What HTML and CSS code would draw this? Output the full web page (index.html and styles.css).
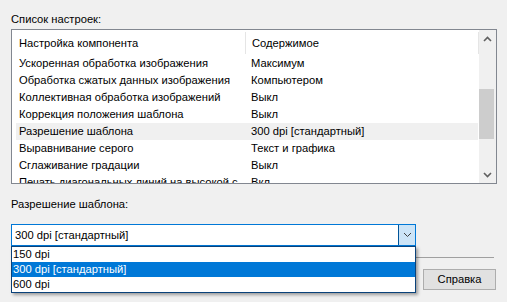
FILE: index.html
```html
<!DOCTYPE html>
<html lang="ru">
<head>
<meta charset="utf-8">
<link rel="stylesheet" href="styles.css">
</head>
<body>
<div class="page">
  <div class="label first">Список настроек:</div>
  <div class="listbox">
    <div class="list">
      <div class="row head"><div class="c1">Настройка компонента</div><div class="c2">Содержимое</div></div>
      <div class="row"><div class="c1">Ускоренная обработка изображения</div><div class="c2">Максимум</div></div>
      <div class="row"><div class="c1">Обработка сжатых данных изображения</div><div class="c2">Компьютером</div></div>
      <div class="row"><div class="c1">Коллективная обработка изображений</div><div class="c2">Выкл</div></div>
      <div class="row"><div class="c1">Коррекция положения шаблона</div><div class="c2">Выкл</div></div>
      <div class="row sel"><div class="c1">Разрешение шаблона</div><div class="c2">300 dpi [стандартный]</div></div>
      <div class="row"><div class="c1">Выравнивание серого</div><div class="c2">Текст и графика</div></div>
      <div class="row"><div class="c1">Сглаживание градации</div><div class="c2">Выкл</div></div>
      <div class="row"><div class="c1">Печать диагональных линий на высокой с</div><div class="c2">Вкл</div></div>
    </div>
    <div class="vscroll">
      <div class="arrow"><svg width="9" height="6" viewBox="0 0 9 6"><path d="M1 5 L4.5 1.5 L8 5" fill="none" stroke="#606060" stroke-width="1.6"/></svg></div>
      <div class="track"><div class="thumb"></div></div>
      <div class="arrow"><svg width="9" height="6" viewBox="0 0 9 6"><path d="M1 1 L4.5 4.5 L8 1" fill="none" stroke="#606060" stroke-width="1.6"/></svg></div>
    </div>
  </div>
  <div class="label second">Разрешение шаблона:</div>
  <div class="combo-wrap">
    <div class="combo">
      <div class="combo-text">300 dpi [стандартный]</div>
      <div class="combo-btn"><svg width="9" height="6" viewBox="0 0 9 6"><path d="M1 1 L4.5 4.5 L8 1" fill="none" stroke="#404040" stroke-width="1"/></svg></div>
    </div>
    <div class="droplist">
      <div class="item">150 dpi</div>
      <div class="item active">300 dpi [стандартный]</div>
      <div class="item">600 dpi</div>
    </div>
  </div>
  <div class="sep"></div>
  <div class="buttons">
    <div class="btn">Справка</div>
  </div>
</div>
</body>
</html>
```
FILE: styles.css
```css
html, body {
  margin: 0;
  padding: 0;
  background: #f0f0f0;
}
body {
  font-family: "Liberation Sans", Arial, sans-serif;
  font-size: 11.2px;
  color: #000;
  width: 507px;
  height: 302px;
  overflow: hidden;
}
.page {
  padding: 11px 10px 0 11px;
}
.label {
  height: 16px;
  line-height: 16px;
  white-space: nowrap;
}
.first {
  margin-bottom: 2px;
}
.listbox {
  width: 484px;
  height: 153px;
  border: 1px solid #828790;
  background: #fff;
  display: flex;
  overflow: hidden;
}
.list {
  flex: 1;
  overflow: hidden;
  padding-left: 4px;
}
.row {
  display: flex;
  height: 17px;
  line-height: 17px;
  white-space: nowrap;
}
.row.head {
  height: 25px;
}
.row.head .c1 {
  border-right: 1px solid #e5e5e5;
  margin-top: 2px;
  line-height: 22px;
  height: 22px;
}
.row.head .c2 {
  line-height: 22px;
  margin-top: 2px;
  height: 22px;
  border-right: 1px solid #e5e5e5;
  flex: 1;
}
.c1 {
  width: 226px;
  padding-left: 3px;
  overflow: hidden;
  flex: none;
}
.c2 {
  padding-left: 6px;
  flex: 1;
  overflow: hidden;
}
.row.sel {
  background: #f0f0f0;
  margin-right: 1px;
}
.vscroll {
  width: 17px;
  flex: none;
  background: #f0f0f0;
  display: flex;
  flex-direction: column;
}
.arrow {
  height: 17px;
  display: flex;
  align-items: center;
  justify-content: center;
  flex: none;
}
.track {
  flex: 1;
  padding-top: 42px;
}
.thumb {
  width: 15px;
  height: 50px;
  background: #cdcdcd;
}
.second {
  margin-top: 12px;
  margin-bottom: 12px;
}
.combo-wrap {
  position: relative;
  width: 405px;
}
.combo {
  height: 20px;
  border: 1px solid #0078d7;
  background: #fff;
  display: flex;
}
.combo-text {
  flex: 1;
  line-height: 20px;
  padding-left: 3px;
  white-space: nowrap;
}
.combo-btn {
  width: 16px;
  background: #cce4f7;
  border-left: 1px solid #005499;
  display: flex;
  align-items: center;
  justify-content: center;
}
.droplist {
  position: absolute;
  left: 0;
  top: 22px;
  width: 403px;
  border: 1px solid #0a427a;
  background: #fff;
  box-shadow: 2px 2px 3px rgba(0,0,0,0.35);
  z-index: 2;
}
.item {
  height: 15px;
  line-height: 15px;
  padding-left: 1px;
  white-space: nowrap;
}
.item.active {
  background: #0078d7;
  color: #fff;
}
.sep {
  margin-top: 11px;
  width: 483px;
  height: 1px;
  background: #a0a0a0;
}
.buttons {
  margin-top: 11px;
  display: flex;
  justify-content: flex-end;
  width: 485px;
}
.btn {
  width: 71px;
  height: 19px;
  line-height: 19px;
  text-align: center;
  border: 1px solid #adadad;
  background: #e1e1e1;
}
```
